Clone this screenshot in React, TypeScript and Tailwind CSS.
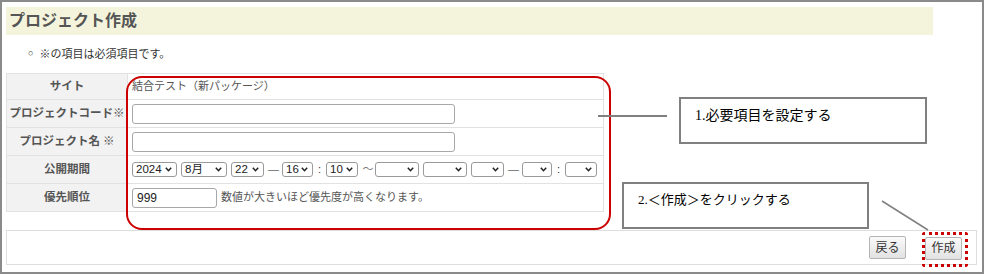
import React from "react";

const font = { fontFamily: '"Liberation Sans", "Noto Sans CJK JP", sans-serif' };
const serif = { fontFamily: '"Liberation Serif", "Noto Sans CJK JP", serif' };

const Chevron = () => (
  <svg width="7" height="5" viewBox="0 0 7 5" className="shrink-0">
    <path d="M0.8 0.8 L3.5 3.7 L6.2 0.8" fill="none" stroke="#222" strokeWidth="1.5" />
  </svg>
);

const FakeSelect: React.FC<{ value?: string; width: string }> = ({ value, width }) => (
  <span
    className={`flex h-[15px] items-center justify-between rounded-[3px] border border-[#9a9a9a] bg-white pl-[3px] pr-[4px] text-[11.5px] leading-none text-[#222] ${width}`}
  >
    <span>{value}</span>
    <Chevron />
  </span>
);

const Row: React.FC<{ label: string; h: string; last?: boolean; children: React.ReactNode }> = ({
  label,
  h,
  last,
  children,
}) => (
  <div className={`flex ${h} ${last ? "" : "border-b border-[#e2e2e2]"}`}>
    <div className="flex w-[121px] shrink-0 items-center justify-center border-r border-[#e2e2e2] bg-[#f2f2f2] text-[11.5px] font-bold text-[#555]">
      {label}
    </div>
    <div className="flex flex-1 items-center pl-[4px] text-[11px] text-[#555]">{children}</div>
  </div>
);

export default function App() {
  return (
    <div
      style={font}
      className="relative h-[274px] w-[984px] overflow-hidden border-2 border-[#8a8a8a] bg-white pl-[4px] pr-[5px] pt-[5px]"
    >
      {/* header */}
      <div className="flex h-[28px] w-[927px] items-center bg-[#f4f4dc] pl-[3px] text-[16px] font-bold text-[#555]">
        プロジェクト作成
      </div>

      {/* note */}
      <div className="flex h-[38px] items-center pl-[22px] text-[11px] text-[#333]">
        <span className="mr-[6px] text-[9px]">○</span>
        ※の項目は必須項目です。
      </div>

      {/* form table */}
      <div className="w-[598px] border border-[#e2e2e2]">
        <Row label="サイト" h="h-[26px]">
          結合テスト（新パッケージ）
        </Row>
        <Row label="プロジェクトコード※" h="h-[28px]">
          <span className="h-[20px] w-[323px] rounded-[3px] border border-[#a8a8a8] bg-white" />
        </Row>
        <Row label="プロジェクト名 ※" h="h-[28px]">
          <span className="h-[20px] w-[323px] rounded-[3px] border border-[#a8a8a8] bg-white" />
        </Row>
        <Row label="公開期間" h="h-[28px]">
          <div className="flex items-center gap-[4px]">
            <FakeSelect value="2024" width="w-[45px]" />
            <FakeSelect value="8月" width="w-[46px]" />
            <FakeSelect value="22" width="w-[33px]" />
            <span className="w-[10px] text-center text-[#666]">—</span>
            <FakeSelect value="16" width="w-[31px]" />
            <span className="w-[5px] text-center text-[#333]">:</span>
            <FakeSelect value="10" width="w-[32px]" />
            <span className="-mr-[3px] w-[12px] text-center text-[#777]">〜</span>
            <FakeSelect width="w-[44px]" />
            <FakeSelect width="w-[44px]" />
            <FakeSelect width="w-[33px]" />
            <span className="w-[10px] text-center text-[#666]">—</span>
            <FakeSelect width="w-[30px]" />
            <span className="w-[5px] text-center text-[#333]">:</span>
            <FakeSelect width="w-[32px]" />
          </div>
        </Row>
        <Row label="優先順位" h="h-[27px]" last>
          <span className="flex h-[20px] w-[85px] items-center rounded-[3px] border border-[#a8a8a8] bg-white pl-[4px] text-[12px] text-[#222]">
            999
          </span>
          <span className="ml-[4px]">数値が大きいほど優先度が高くなります。</span>
        </Row>
      </div>

      {/* footer bar */}
      <div className="mt-[18px] flex h-[35px] w-[971px] items-center justify-end gap-[19px] border border-[#dedede] pr-[14px]">
        <button className="h-[23px] w-[37px] rounded-[2px] border border-[#b5b5b5] bg-gradient-to-b from-[#fafafa] to-[#e2e2e2] text-[12px] text-[#333]">
          戻る
        </button>
        <div className="relative">
          <button className="h-[23px] w-[37px] rounded-[2px] border border-[#b5b5b5] bg-gradient-to-b from-[#fafafa] to-[#e2e2e2] text-[12px] text-[#333]">
            作成
          </button>
          <span className="pointer-events-none absolute -bottom-[7px] -left-[3px] -right-[6px] -top-[3px] rounded-[3px] border-[3px] border-dotted border-[#cc0000]" />
        </div>
      </div>

      {/* annotations */}
      <span className="pointer-events-none absolute left-[124px] top-[74px] h-[154px] w-[485px] rounded-[16px] border-2 border-[#cc0000]" />

      <svg className="pointer-events-none absolute inset-0" width="980" height="270">
        <line x1="596" y1="114" x2="665" y2="114" stroke="#808080" strokeWidth="2" />
        <line x1="880" y1="199" x2="926" y2="228" stroke="#808080" strokeWidth="1.5" />
      </svg>

      <div
        style={serif}
        className="absolute left-[677px] top-[95px] h-[47px] w-[248px] border-2 border-[#808080] bg-white pl-[14px] pt-[6px] text-[14px] text-black"
      >
        1.必要項目を設定する
      </div>
      <div
        style={serif}
        className="absolute left-[620px] top-[180px] h-[47px] w-[247px] border-2 border-[#808080] bg-white pl-[14px] pt-[6px] text-[13px] text-black"
      >
        2.＜作成＞をクリックする
      </div>
    </div>
  );
}
